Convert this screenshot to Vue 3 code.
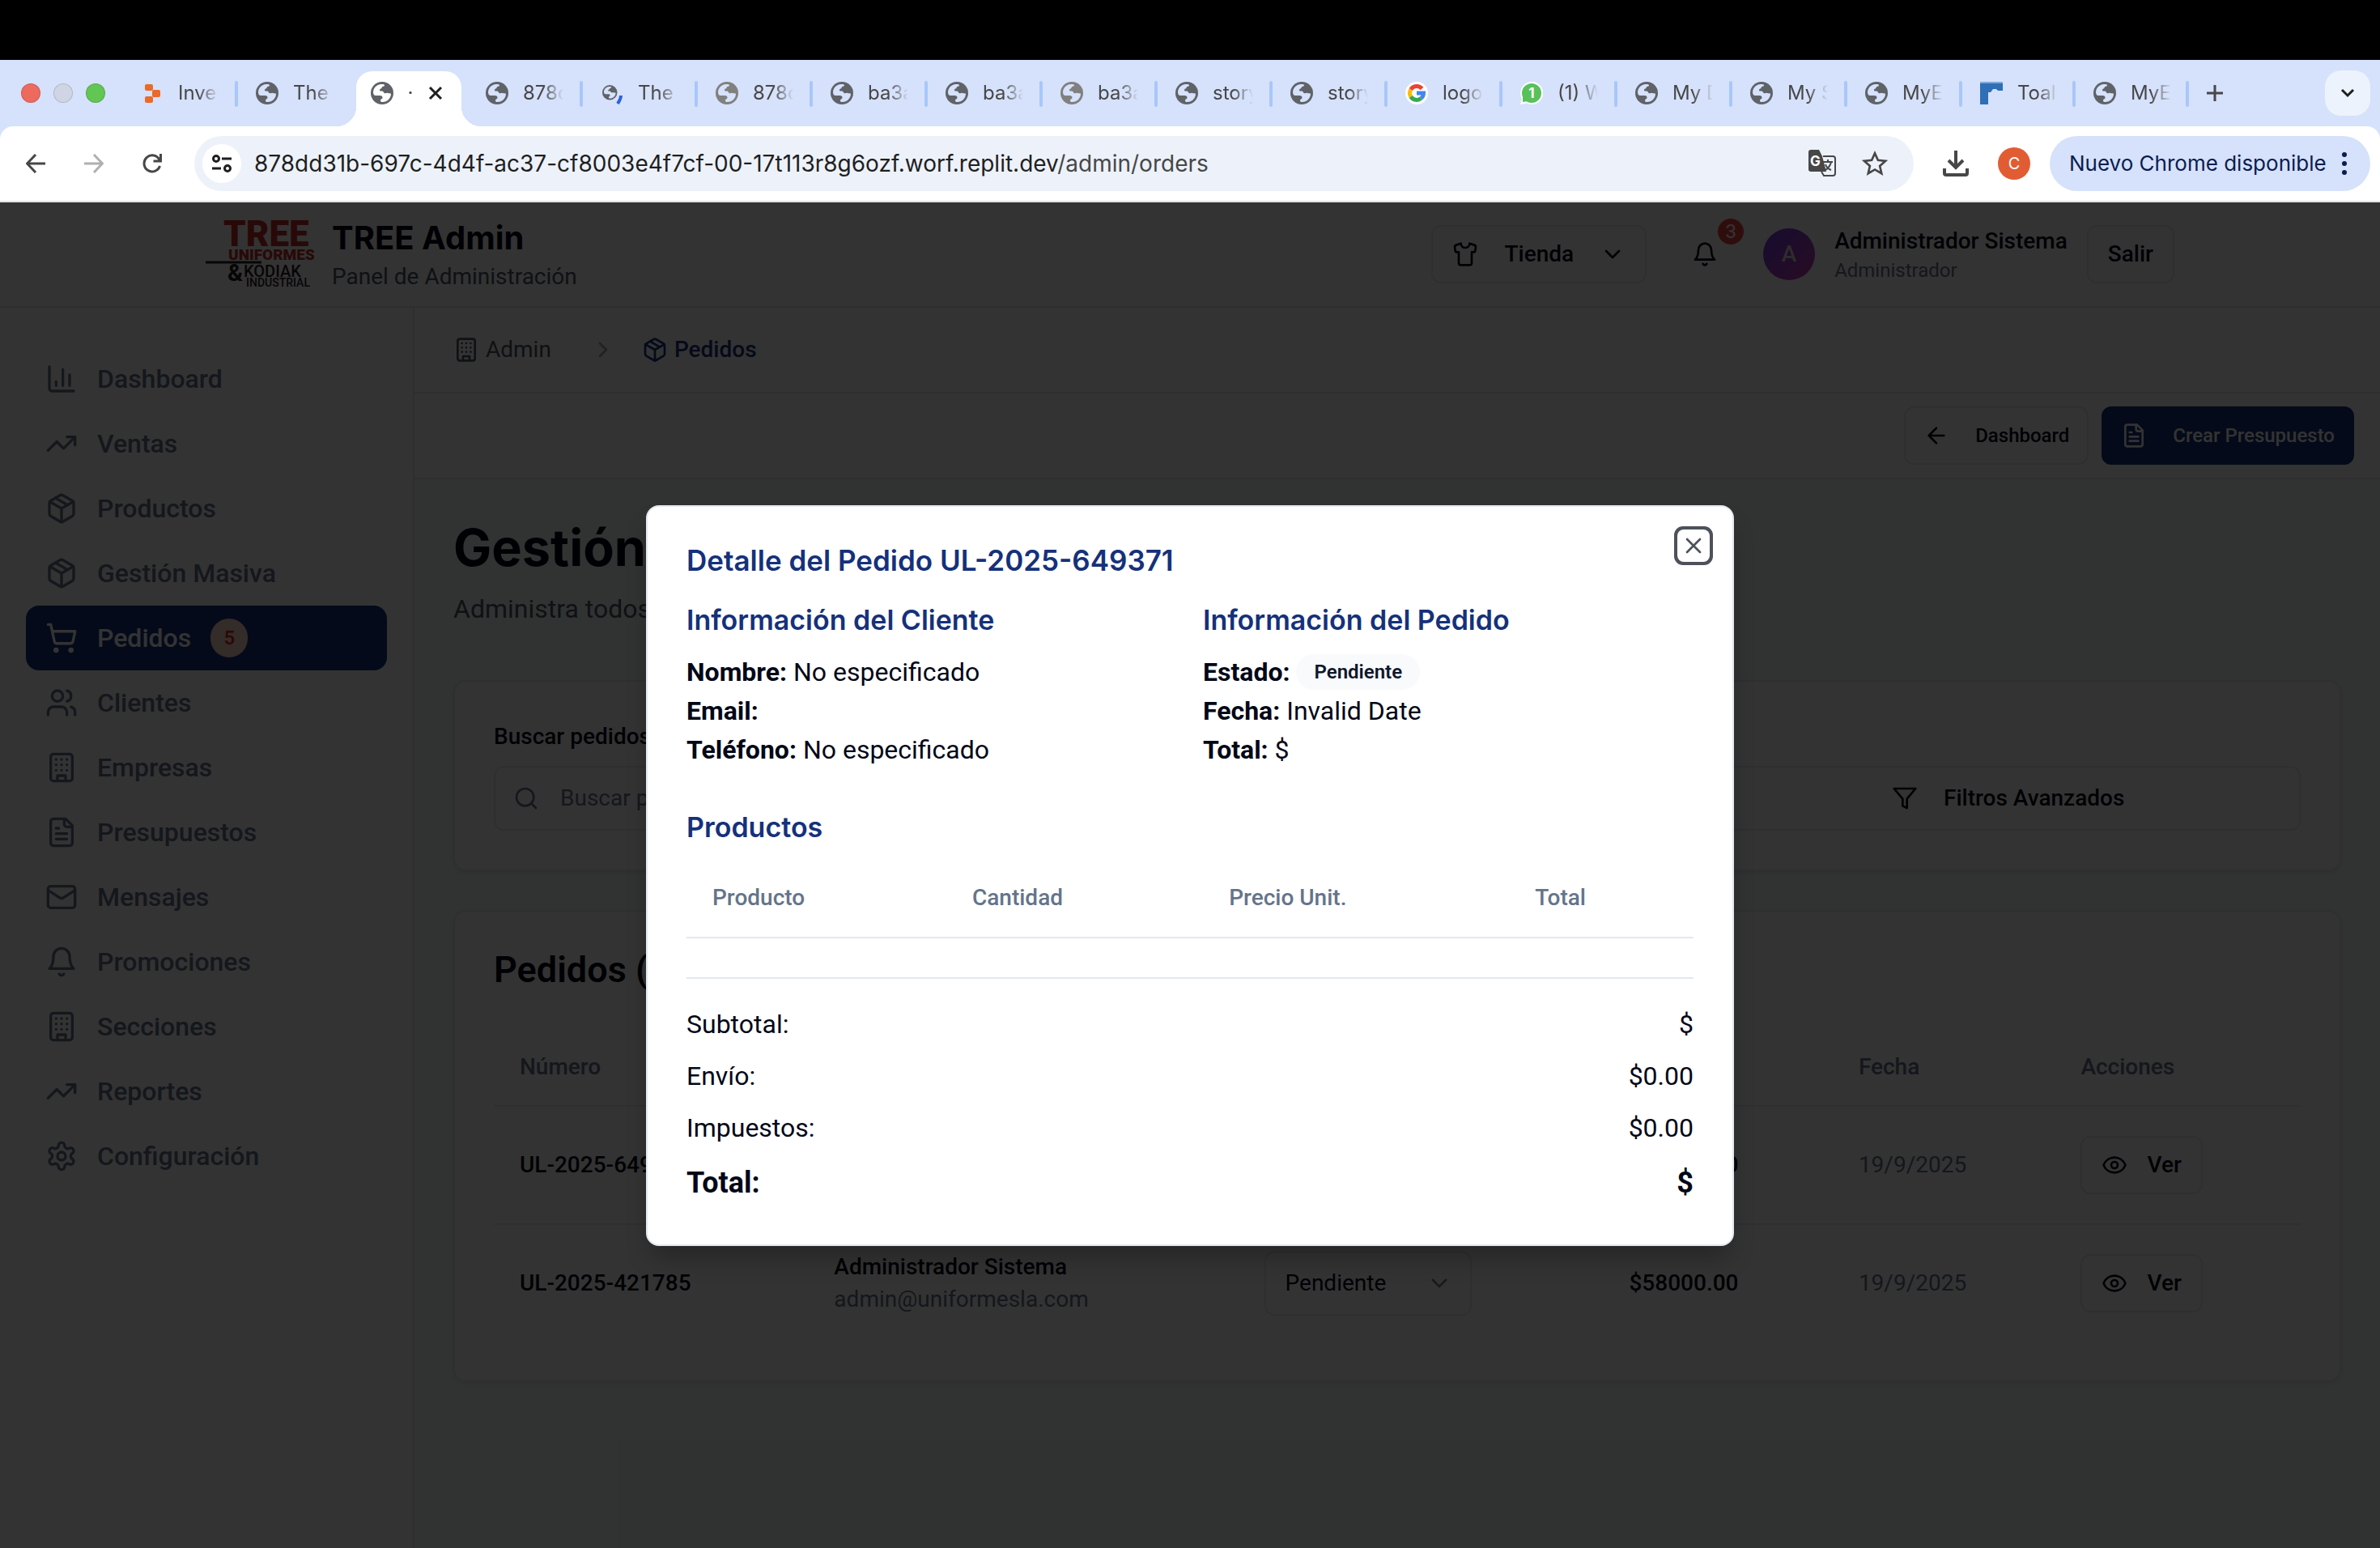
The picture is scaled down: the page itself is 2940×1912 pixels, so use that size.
<script setup>
import { ref } from 'vue'

const tabs = [
  { icon: 'replit', title: 'Inventario', sep: true },
  { icon: 'globe', title: 'The', sep: false },
  { icon: 'globe', title: '·', sep: false, active: true },
  { icon: 'globe', title: '878dd', sep: true },
  { icon: 'globePen', title: 'The', sep: true },
  { icon: 'globeWarm', title: '878dd', sep: true },
  { icon: 'globe', title: 'ba3a1', sep: true },
  { icon: 'globe', title: 'ba3a1', sep: true },
  { icon: 'globeWarm', title: 'ba3a1', sep: true },
  { icon: 'globe', title: 'story', sep: true },
  { icon: 'globe', title: 'story', sep: true },
  { icon: 'google', title: 'logo', sep: true },
  { icon: 'whatsapp', title: '(1) W', sep: true },
  { icon: 'globe', title: 'My D', sep: true },
  { icon: 'globe', title: 'My S', sep: true },
  { icon: 'globe', title: 'MyE', sep: true },
  { icon: 'toal', title: 'Toalla', sep: true },
  { icon: 'globe', title: 'MyE', sep: true },
]

const building = '<rect width="16" height="20" x="4" y="2" rx="2"/><path d="M9 22v-4h6v4M8 6h.01M16 6h.01M12 6h.01M12 10h.01M12 14h.01M16 10h.01M16 14h.01M8 10h.01M8 14h.01"/>'
const box = '<path d="m7.5 4.27 9 5.15"/><path d="M21 8a2 2 0 0 0-1-1.73l-7-4a2 2 0 0 0-2 0l-7 4A2 2 0 0 0 3 8v8a2 2 0 0 0 1 1.73l7 4a2 2 0 0 0 2 0l7-4A2 2 0 0 0 21 16Z"/><path d="m3.3 7 8.7 5 8.7-5M12 22V12"/>'
const trend = '<path d="M22 7l-8.5 8.5-5-5L2 17"/><path d="M16 7h6v6"/>'
const bell = '<path d="M6 8a6 6 0 0 1 12 0c0 7 3 9 3 9H3s3-2 3-9"/><path d="M10.3 21a1.94 1.94 0 0 0 3.4 0"/>'
const file = '<path d="M15 2H6a2 2 0 0 0-2 2v16a2 2 0 0 0 2 2h12a2 2 0 0 0 2-2V7Z"/><path d="M14 2v4a2 2 0 0 0 2 2h4M10 9H8M16 13H8M16 17H8"/>'
const glyphs = {
  building, box, trend, bell, file,
  chart: '<path d="M3 3v16a2 2 0 0 0 2 2h16M18 17V9M13 17V5M8 17v-3"/>',
  cart: '<circle cx="8" cy="21" r="1"/><circle cx="19" cy="21" r="1"/><path d="M2.05 2.05h2l2.66 12.42a2 2 0 0 0 2 1.58h9.78a2 2 0 0 0 1.95-1.57l1.65-7.43H5.12"/>',
  users: '<path d="M16 21v-2a4 4 0 0 0-4-4H6a4 4 0 0 0-4 4v2"/><circle cx="9" cy="7" r="4"/><path d="M22 21v-2a4 4 0 0 0-3-3.87M16 3.13a4 4 0 0 1 0 7.75"/>',
  mail: '<rect width="20" height="16" x="2" y="4" rx="2"/><path d="m22 7-8.97 5.7a1.94 1.94 0 0 1-2.06 0L2 7"/>',
  gear: '<path d="M12.22 2h-.44a2 2 0 0 0-2 2v.18a2 2 0 0 1-1 1.73l-.43.25a2 2 0 0 1-2 0l-.15-.08a2 2 0 0 0-2.73.73l-.22.38a2 2 0 0 0 .73 2.73l.15.1a2 2 0 0 1 1 1.72v.51a2 2 0 0 1-1 1.74l-.15.09a2 2 0 0 0-.73 2.73l.22.38a2 2 0 0 0 2.73.73l.15-.08a2 2 0 0 1 2 0l.43.25a2 2 0 0 1 1 1.73V20a2 2 0 0 0 2 2h.44a2 2 0 0 0 2-2v-.18a2 2 0 0 1 1-1.73l.43-.25a2 2 0 0 1 2 0l.15.08a2 2 0 0 0 2.73-.73l.22-.39a2 2 0 0 0-.73-2.73l-.15-.08a2 2 0 0 1-1-1.74v-.5a2 2 0 0 1 1-1.74l.15-.09a2 2 0 0 0 .73-2.73l-.22-.38a2 2 0 0 0-2.73-.73l-.15.08a2 2 0 0 1-2 0l-.43-.25a2 2 0 0 1-1-1.73V4a2 2 0 0 0-2-2z"/><circle cx="12" cy="12" r="3"/>',
  shirt: '<path d="M20.38 3.46 16 2a4 4 0 0 1-8 0L3.62 3.46a2 2 0 0 0-1.34 2.23l.58 3.47a1 1 0 0 0 .99.84H6v10c0 1.1.9 2 2 2h8a2 2 0 0 0 2-2V10h2.15a1 1 0 0 0 .99-.84l.58-3.47a2 2 0 0 0-1.34-2.23z"/>',
  down: '<path d="m6 9 6 6 6-6"/>',
  right: '<path d="m9 18 6-6-6-6"/>',
  left: '<path d="m12 19-7-7 7-7M19 12H5"/>',
  search: '<circle cx="11" cy="11" r="8"/><path d="m21 21-4.3-4.3"/>',
  funnel: '<path d="M22 3H2l8 9.46V19l4 2v-8.54z"/>',
  eye: '<path d="M2.06 12.35a1 1 0 0 1 0-.7 10.75 10.75 0 0 1 19.88 0 1 1 0 0 1 0 .7 10.75 10.75 0 0 1-19.88 0"/><circle cx="12" cy="12" r="3"/>',
  close: '<path d="M18 6 6 18M6 6l12 12"/>',
}

const menu = [
  { icon: 'chart', label: 'Dashboard' },
  { icon: 'trend', label: 'Ventas' },
  { icon: 'box', label: 'Productos' },
  { icon: 'box', label: 'Gestión Masiva' },
  { icon: 'cart', label: 'Pedidos', active: true, badge: 5 },
  { icon: 'users', label: 'Clientes' },
  { icon: 'building', label: 'Empresas' },
  { icon: 'file', label: 'Presupuestos' },
  { icon: 'mail', label: 'Mensajes' },
  { icon: 'bell', label: 'Promociones' },
  { icon: 'building', label: 'Secciones' },
  { icon: 'trend', label: 'Reportes' },
  { icon: 'gear', label: 'Configuración' },
]

const orders = ref([
  { id: 'UL-2025-649371', name: 'Administrador Sistema', email: 'admin@uniformesla.com', status: 'Pendiente', total: '$58000.00', date: '19/9/2025' },
  { id: 'UL-2025-421785', name: 'Administrador Sistema', email: 'admin@uniformesla.com', status: 'Pendiente', total: '$58000.00', date: '19/9/2025' },
])

const totals = [
  ['Subtotal:', '$'],
  ['Envío:', '$0.00'],
  ['Impuestos:', '$0.00'],
]
</script>

<template>
  <div class="screen">
    <div class="notch"></div>

    <header class="tabstrip">
      <div class="lights"><i class="red"></i><i class="gray"></i><i class="green"></i></div>
      <div class="tabs">
        <div v-for="(t, i) in tabs" :key="i" class="tab" :class="{ active: t.active, sep: t.sep }">
          <svg v-if="t.icon.startsWith('globe')" class="fav" viewBox="0 0 28 28">
            <g :transform="t.icon === 'globePen' ? 'translate(2 4) scale(.66)' : ''">
              <circle cx="14" cy="14" r="14" :fill="t.icon === 'globeWarm' ? '#80807f' : '#5f6368'" />
              <path :fill="t.active ? '#fff' : '#d6e1fb'" d="M3 13C3 8 7 3.500 13 3c2-.2 4 .2 4 1.500 0 1.200-1.500 1-2.500 1.500-1.200.600-.500 2-2 2.500-1.200.400-1.500 1-1.500 2 0 1.300 1.500 1 3 1 1.800 0 1.500 2 3 2.500 1.500.600 2.500-.500 4 0 1.500.500 4 0 4 1 0 5-4.500 10-10.500 10-2 0-2.500-.500-2.500-2 0-1.700 2.500-1.500 2.500-3.500 0-1.500-1-2.500-3-2.500H6c-2 0-3-2-3-4z" />
            </g>
            <path v-if="t.icon === 'globePen'" d="M25 17c0 4-2 7-4 10" stroke="#2b62d9" stroke-width="4" fill="none" />
          </svg>
          <svg v-else-if="t.icon === 'replit'" class="fav" viewBox="0 0 28 28" fill="#ea6a2a">
            <rect x="5" y="3" width="10" height="8" rx="2" /><rect x="14" y="10" width="10" height="9" rx="2" /><rect x="5" y="18" width="10" height="8" rx="2" />
          </svg>
          <svg v-else-if="t.icon === 'google'" class="fav" viewBox="0 0 28 28">
            <circle cx="14" cy="14" r="14" fill="#fff" />
            <g fill="none" stroke-width="5">
              <path d="M20.500 8.500A8.500 8.500 0 0 0 6.800 9.600" stroke="#ea4335" /><path d="M6.800 9.600a8.500 8.500 0 0 0 0 8.800" stroke="#fbbc05" /><path d="M6.800 18.400a8.500 8.500 0 0 0 12.700 2" stroke="#34a853" /><path d="M19.500 20.400a8.500 8.500 0 0 0 3-6.400H14" stroke="#4285f4" />
            </g>
          </svg>
          <svg v-else-if="t.icon === 'whatsapp'" class="fav" viewBox="0 0 28 28">
            <path d="M14 0a14 14 0 1 1-6 26.500L0 28l2-7A14 14 0 0 1 14 0z" fill="#fff" /><circle cx="14" cy="14" r="12" fill="#58c15a" /><path d="M3 19v6l6-1z" fill="#58c15a" /><text x="14" y="20" text-anchor="middle" font-size="17" font-weight="700" fill="#fff">1</text>
          </svg>
          <svg v-else class="fav" viewBox="0 0 28 28"><path d="M0 0h28v11h-6l-2-2h-4l-3 4H10v15H0z" fill="#2f6fb5" /><path d="M0 0h28v2H0z" fill="#7fa9da" /></svg>
          <span class="tabtitle">{{ t.title }}</span>
          <svg v-if="t.active" class="tabclose" viewBox="0 0 20 20"><path d="M3 3l14 14M17 3 3 17" stroke="#1f1f1f" stroke-width="3" /></svg>
        </div>
      </div>
      <button class="plus" aria-label="Nueva pestaña"><svg viewBox="0 0 20 20"><path d="M10 0v20M0 10h20" stroke="#474747" stroke-width="3" /></svg></button>
      <button class="tabsearch" aria-label="Buscar pestañas"><svg viewBox="0 0 20 20"><path d="m3 6 7 7 7-7" fill="none" stroke="#1f1f1f" stroke-width="3" /></svg></button>
    </header>

    <div class="toolbar">
      <button class="nav" aria-label="Atrás"><svg viewBox="0 0 24 24"><path d="M24 12H2M12 1 1.500 12 12 23" /></svg></button>
      <button class="nav off" aria-label="Adelante"><svg viewBox="0 0 24 24"><path d="M0 12h22M12 1l10.500 11L12 23" /></svg></button>
      <button class="nav" aria-label="Recargar"><svg viewBox="0 0 24 24"><path d="M21.500 15A10 10 0 1 1 21 7.500M22.500 0v9h-9" /></svg></button>
      <div class="omnibox">
        <span class="site"><svg viewBox="0 0 24 24" fill="none" stroke="#1f1f1f" stroke-width="3"><circle cx="5" cy="6" r="3.500" /><path d="M12 6h12M0 18h11" /><circle cx="19" cy="18" r="3.500" /></svg></span>
        <span class="url">878dd31b-697c-4d4f-ac37-cf8003e4f7cf-00-17t113r8g6ozf.worf.replit.dev<span class="path">/admin/orders</span></span>
        <svg class="translate" viewBox="0 0 34 34"><path d="M3 0h10l4 8 5 19H3a3 3 0 0 1-3-3V3a3 3 0 0 1 3-3z" fill="#474747" /><path d="M18 8h12a3 3 0 0 1 3 3v18a3 3 0 0 1-3 3H19l-3-5" fill="none" stroke="#474747" stroke-width="2" /><path d="M18 15h12M24 12v3M28 15c-1 5-4 8-7 10M21 18c1 3 4 6 7 7" fill="none" stroke="#474747" stroke-width="2" /><text x="2" y="20" font-size="17" font-weight="700" fill="#fff">G</text></svg>
        <svg class="star" viewBox="0 0 24 24"><path d="m12 2.500 2.900 6.400 7 .7-5.300 4.700 1.600 6.900L12 17.600l-6.200 3.600 1.600-6.900L2.100 9.600l7-.7z" fill="none" stroke="#474747" stroke-width="2" /></svg>
      </div>
      <button class="tool" aria-label="Descargas"><svg viewBox="0 0 32 32"><path d="M16 0v20M7 12l9 9 9-9M2 22v6a2 2 0 0 0 2 2h24a2 2 0 0 0 2-2v-6" fill="none" stroke="#474747" stroke-width="4" /></svg></button>
      <span class="profile">C</span>
      <button class="update">Nuevo Chrome disponible<svg viewBox="0 0 6 28"><circle cx="3" cy="3" r="3" /><circle cx="3" cy="14" r="3" /><circle cx="3" cy="25" r="3" /></svg></button>
    </div>

    <div class="app">
      <header class="apphead">
        <div class="headinner">
          <svg class="logo" viewBox="0 0 134 84">
            <g fill="#c6302c"><text x="22" y="32" font-size="44" font-weight="900">TREE</text><text x="28" y="49" font-size="19" font-weight="900">UNIFORMES</text></g>
            <path d="M0 52h69" stroke="#222" stroke-width="3" />
            <g fill="#222"><text x="27" y="75" font-size="29" font-weight="700">&amp;</text><text x="47" y="70" font-size="20" font-weight="500">KODIAK</text><text x="50" y="82" font-size="14" font-weight="500">INDUSTRIAL</text></g>
          </svg>
          <div class="brand"><h1>TREE Admin</h1><p>Panel de Administración</p></div>
          <button class="btn store"><svg class="ic" viewBox="0 0 24 24" v-html="glyphs.shirt"></svg>Tienda<svg class="ic" viewBox="0 0 24 24" v-html="glyphs.down"></svg></button>
          <button class="bellbtn" aria-label="Notificaciones"><svg class="ic" viewBox="0 0 24 24" v-html="glyphs.bell"></svg><span class="count">3</span></button>
          <span class="avatar">A</span>
          <div class="who"><strong>Administrador Sistema</strong><small>Administrador</small></div>
          <button class="btn">Salir</button>
        </div>
      </header>

      <div class="body">
        <nav class="side">
          <a v-for="m in menu" :key="m.label" href="#" :class="{ on: m.active }">
            <svg class="ic big" viewBox="0 0 24 24" v-html="glyphs[m.icon]"></svg>{{ m.label }}<span v-if="m.badge" class="pill">{{ m.badge }}</span>
          </a>
        </nav>
        <div class="content">
          <div class="crumbs">
            <a href="#"><svg class="ic" viewBox="0 0 24 24" v-html="glyphs.building"></svg>Admin</a>
            <svg class="ic chev" viewBox="0 0 24 24" v-html="glyphs.right"></svg>
            <span class="here"><svg class="ic" viewBox="0 0 24 24" v-html="glyphs.box"></svg>Pedidos</span>
          </div>
          <div class="actions">
            <button class="btn small"><svg class="ic" viewBox="0 0 24 24" v-html="glyphs.left"></svg>Dashboard</button>
            <button class="btn small primary"><svg class="ic" viewBox="0 0 24 24" v-html="glyphs.file"></svg>Crear Presupuesto</button>
          </div>
          <main class="main">
            <h2 class="pagetitle">Gestión de Pedidos</h2>
            <p class="lead">Administra todos los pedidos</p>
            <section class="card filters">
              <div class="field">
                <label for="q">Buscar pedidos</label>
                <div class="searchbox"><svg class="ic" viewBox="0 0 24 24" v-html="glyphs.search"></svg><input id="q" type="text" placeholder="Buscar pedidos" /></div>
              </div>
              <button class="btn filter"><svg class="ic" viewBox="0 0 24 24" v-html="glyphs.funnel"></svg>Filtros Avanzados</button>
            </section>
            <section class="card">
              <h3 class="cardtitle">Pedidos (2)</h3>
              <table class="orders">
                <colgroup><col class="c1" /><col class="c2" /><col class="c3" /><col class="c4" /><col class="c5" /><col /></colgroup>
                <thead><tr><th>Número</th><th>Cliente</th><th>Estado</th><th>Total</th><th>Fecha</th><th>Acciones</th></tr></thead>
                <tbody>
                  <tr v-for="o in orders" :key="o.id">
                    <td class="strong">{{ o.id }}</td>
                    <td><div class="strong">{{ o.name }}</div><div class="dim">{{ o.email }}</div></td>
                    <td><div class="pick"><select v-model="o.status" aria-label="Estado"><option>Pendiente</option></select><svg class="ic" viewBox="0 0 24 24" v-html="glyphs.down"></svg></div></td>
                    <td class="strong">{{ o.total }}</td>
                    <td class="dim">{{ o.date }}</td>
                    <td><button class="btn view"><svg class="ic" viewBox="0 0 24 24" v-html="glyphs.eye"></svg>Ver</button></td>
                  </tr>
                </tbody>
              </table>
            </section>
          </main>
        </div>
      </div>

      <div class="overlay">
        <div class="modal" role="dialog" aria-labelledby="dlg">
          <button class="x" aria-label="Cerrar"><svg class="ic" viewBox="0 0 24 24" v-html="glyphs.close"></svg></button>
          <h2 id="dlg">Detalle del Pedido UL-2025-649371</h2>
          <div class="info">
            <div>
              <h3>Información del Cliente</h3>
              <p><b>Nombre:</b> No especificado</p>
              <p><b>Email:</b></p>
              <p><b>Teléfono:</b> No especificado</p>
            </div>
            <div>
              <h3>Información del Pedido</h3>
              <p class="state"><b>Estado:</b> <span class="chip">Pendiente</span></p>
              <p><b>Fecha:</b> Invalid Date</p>
              <p><b>Total:</b> $</p>
            </div>
          </div>
          <h3>Productos</h3>
          <table class="items">
            <colgroup><col class="p1" /><col class="p2" /><col class="p3" /><col /></colgroup>
            <thead><tr><th>Producto</th><th>Cantidad</th><th>Precio Unit.</th><th>Total</th></tr></thead>
          </table>
          <div class="sum">
            <div v-for="t in totals" :key="t[0]"><span>{{ t[0] }}</span><span>{{ t[1] }}</span></div>
            <div class="grand"><span>Total:</span><span>$</span></div>
          </div>
        </div>
      </div>
    </div>
  </div>
</template>

<style>
body { background: #000; }
</style>

<style scoped>
* { box-sizing: border-box; margin: 0; }
.screen { min-height: 100vh; display: flex; flex-direction: column; background: #d6e1fb; font-family: Roboto, "Liberation Sans", sans-serif; font-size: 28px; line-height: 40px; color: #020817; }
button { font: inherit; color: inherit; border: 0; background: none; padding: 0; display: flex; align-items: center; justify-content: center; }
a { color: inherit; text-decoration: none; }
svg { flex: none; display: block; }
.ic { width: 32px; height: 32px; fill: none; stroke: currentColor; stroke-width: 2; stroke-linecap: round; stroke-linejoin: round; }
.ic.big { width: 40px; height: 40px; }

.notch { height: 74px; background: #000; }
.tabstrip { height: 82px; display: flex; align-items: center; font-family: Inter, sans-serif; font-size: 24px; color: #474747; padding-right: 12px; }
.lights { display: flex; gap: 16px; padding-left: 26px; width: 150px; flex: none; }
.lights i { width: 24px; height: 24px; border-radius: 50%; border: 1px solid #0002; }
.red { background: #ed6a5e; }
.gray { background: #cfd5e4; }
.green { background: #62c554; }
.tabs { display: flex; align-self: stretch; }
.tab { width: 142px; display: flex; align-items: center; gap: 18px; padding-left: 24px; position: relative; }
.tab:nth-last-child(-n+2) { width: 140px; }
.tab.sep::after { content: ""; position: absolute; right: -2px; top: 26px; width: 4px; height: 32px; border-radius: 2px; background: #a8c7fa; }
.fav { width: 28px; height: 28px; }
.tabtitle { width: 50px; overflow: hidden; white-space: nowrap; mask-image: linear-gradient(90deg, #000 50%, transparent); }
.tab.active { margin: 14px 6px 0; width: 130px; padding: 0 20px 14px 18px; gap: 12px; background: #fff; border-radius: 20px 20px 0 0; }
.tab.active::before, .tab.active::after { content: ""; position: absolute; bottom: 0; width: 24px; height: 24px; }
.tab.active::before { left: -24px; background: radial-gradient(circle at 0 0, transparent 24px, #fff 24px); }
.tab.active::after { right: -24px; background: radial-gradient(circle at 100% 0, transparent 24px, #fff 24px); }
.tab.active .tabtitle { width: 18px; text-align: center; mask-image: none; }
.tabclose { width: 20px; height: 20px; }
.plus { margin-left: 24px; }
.plus svg { width: 20px; height: 20px; }
.tabsearch { width: 56px; height: 56px; border-radius: 20px; background: #ecf3fc; margin-left: auto; }
.tabsearch svg { width: 20px; height: 20px; }

.toolbar { height: 94px; display: flex; align-items: center; padding: 0 12px 0 32px; background: #fff; border-bottom: 2px solid #dfe1e2; border-radius: 16px 16px 0 0; font-family: Inter, sans-serif; }
.nav { margin-right: 48px; }
.nav svg { width: 24px; height: 24px; fill: none; stroke: #474747; stroke-width: 3; }
.nav.off svg { stroke: #b0b0b0; }
.nav + .omnibox { margin-left: -8px; }
.omnibox { flex: 1; height: 68px; border-radius: 34px; background: #edf2fa; display: flex; align-items: center; padding: 0 32px 0 10px; color: #1f1f1f; }
.site { width: 48px; height: 48px; border-radius: 50%; background: #fff; display: grid; place-items: center; margin-right: 16px; }
.site svg { width: 24px; height: 24px; }
.url { flex: 1; font-size: 28px; white-space: nowrap; }
.path { color: #474747; }
.translate { width: 34px; height: 34px; margin-right: 32px; }
.star { width: 32px; height: 32px; }
.tool { margin: 0 36px; }
.tool svg { width: 32px; height: 32px; }
.profile { width: 40px; height: 40px; border-radius: 50%; background: #e25c33; color: #fff; font-size: 20px; text-align: center; margin-right: 24px; }
.update { height: 68px; width: 396px; border-radius: 34px; background: #d6e1fb; color: #0a1d4f; font-size: 26px; justify-content: space-between; padding: 0 29px 0 24px; }
.update svg { width: 6px; height: 28px; fill: #0a1d4f; }

.app { flex: 1; display: flex; flex-direction: column; position: relative; background: #f2fcf8; }
.apphead { background: #fff; border-bottom: 2px solid #e5e7eb; }
.headinner { max-width: 2560px; height: 128px; margin: 0 auto; padding: 0 64px; display: flex; align-items: center; }
.logo { width: 134px; height: 84px; }
.brand { margin-left: 22px; margin-right: auto; }
.brand h1 { font: 700 40px/56px Inter, sans-serif; color: #020817; }
.brand p { color: #4b5563; }
.btn { height: 72px; border: 2px solid #e2e8f0; border-radius: 12px; background: #fff; padding: 0 24px; font-weight: 500; gap: 32px; }
.bellbtn { width: 80px; height: 72px; margin: 0 32px; position: relative; }
.count { position: absolute; top: -8px; right: -8px; width: 32px; height: 32px; border-radius: 50%; background: #ef4444; color: #fff; font-size: 24px; line-height: 32px; text-align: center; }
.avatar { width: 64px; height: 64px; border-radius: 50%; background: linear-gradient(135deg, #6d3bea, #c83fb0); color: #ddd; text-align: center; line-height: 64px; font-weight: 500; }
.who { margin: 0 24px; display: flex; flex-direction: column; }
.who strong { font-weight: 500; }
.who small { font-size: 24px; line-height: 32px; color: #64748b; }

.body { flex: 1; display: flex; }
.side { width: 512px; flex: none; background: #fff; border-right: 2px solid #e5e7eb; padding: 48px 32px; font-size: 32px; font-weight: 500; color: #64748b; }
.side a { display: flex; align-items: center; height: 80px; padding: 0 24px; gap: 24px; border-radius: 16px; }
.side a.on { background: #14327f; color: #fff; }
.pill { width: 46px; height: 48px; border-radius: 24px; background: #ffd9c8; color: #dc2626; font-size: 24px; line-height: 48px; text-align: center; }
.content { flex: 1; min-width: 0; display: flex; flex-direction: column; }
.crumbs { height: 106px; background: #fff; border-bottom: 2px solid #e5e7eb; padding: 0 48px; display: flex; align-items: center; color: #4b5563; }
.crumbs a, .here { display: flex; align-items: center; gap: 8px; }
.here { color: #14327f; font-weight: 500; }
.chev { margin: 0 32px 0 48px; color: #9ca3af; }
.actions { height: 106px; background: #fff; border-bottom: 2px solid #e5e7eb; padding: 0 32px; display: flex; align-items: center; justify-content: flex-end; gap: 16px; }
.btn.small { font-size: 24px; padding: 0 22px; }
.btn.primary { background: #14327f; border-color: #14327f; color: #fff; }
.main { padding: 48px; }
.pagetitle { font: 700 63px/72px Inter, sans-serif; }
.lead { font-size: 32px; line-height: 48px; color: #4b5563; margin: 16px 0 64px; }
.card { background: #fff; border: 2px solid #e2e8f0; border-radius: 16px; padding: 48px; box-shadow: 0 2px 4px #0001; }
.card + .card { margin-top: 48px; }
.filters { display: grid; grid-template-columns: repeat(3, 1fr); column-gap: 32px; align-items: end; }
.field { grid-column: span 2; }
label { display: block; font-weight: 500; margin-bottom: 16px; }
.searchbox { height: 80px; border: 2px solid #e2e8f0; border-radius: 12px; display: flex; align-items: center; gap: 24px; padding: 0 22px; color: #64748b; }
.searchbox input { flex: 1; border: 0; background: none; font: inherit; outline: 0; }
.searchbox input::placeholder { color: #64748b; }
.filter { height: 80px; }
.cardtitle { font-size: 45px; line-height: 48px; font-weight: 600; margin-bottom: 48px; }
table { width: 100%; border-collapse: collapse; table-layout: fixed; }
th { height: 96px; padding: 0 32px; text-align: left; font-weight: 500; color: #64748b; }
td { padding: 32px; height: 144px; }
.orders tr:not(tbody tr:last-child) { border-bottom: 2px solid #e2e8f0; }
.c1 { width: 17.4%; }
.c2 { width: 23.8%; }
.c3 { width: 20.2%; }
.c4 { width: 12.7%; }
.c5 { width: 12.3%; }
.strong { font-weight: 500; }
.dim { color: #64748b; }
.pick { position: relative; width: 256px; }
.pick select { width: 100%; height: 80px; appearance: none; border: 2px solid #e2e8f0; border-radius: 12px; background: #fff; font: inherit; color: inherit; padding: 0 24px; display: block; }
.pick svg { position: absolute; right: 24px; top: 24px; opacity: .5; }
.view { gap: 24px; }

.overlay { position: absolute; inset: 0; background: rgba(0, 0, 0, .8); display: grid; place-items: center; }
.modal { position: relative; width: 1344px; background: #fff; border: 2px solid #e2e8f0; border-radius: 16px; padding: 48px; font-size: 32px; line-height: 48px; box-shadow: 0 20px 30px -6px #0004; }
.modal h2 { font: 600 35px/36px Inter, sans-serif; color: #15317b; margin-bottom: 32px; }
.modal h3 { font: 600 34px/48px Inter, sans-serif; color: #15317b; margin-bottom: 16px; }
.x { position: absolute; right: 32px; top: 32px; width: 32px; height: 32px; border-radius: 4px; background: #fff; opacity: .7; box-shadow: 0 0 0 4px #fff, 0 0 0 8px #020817; }
.info { display: grid; grid-template-columns: 1fr 1fr; gap: 32px; margin-bottom: 48px; }
.state { display: flex; align-items: center; gap: 8px; height: 48px; }
.chip { height: 44px; border-radius: 22px; background: #f8fafc; color: #0f172a; font-size: 24px; line-height: 44px; font-weight: 600; padding: 0 22px; }
.items { font-size: 28px; line-height: 40px; border-bottom: 2px solid #e2e8f0; }
.p1 { width: 25.8%; }
.p2 { width: 25.5%; }
.p3 { width: 30.4%; }
.sum { margin-top: 48px; border-top: 2px solid #e2e8f0; padding-top: 32px; display: flex; flex-direction: column; gap: 16px; }
.sum div { display: flex; justify-content: space-between; }
.sum .grand { font-size: 36px; line-height: 56px; font-weight: 700; }
</style>
